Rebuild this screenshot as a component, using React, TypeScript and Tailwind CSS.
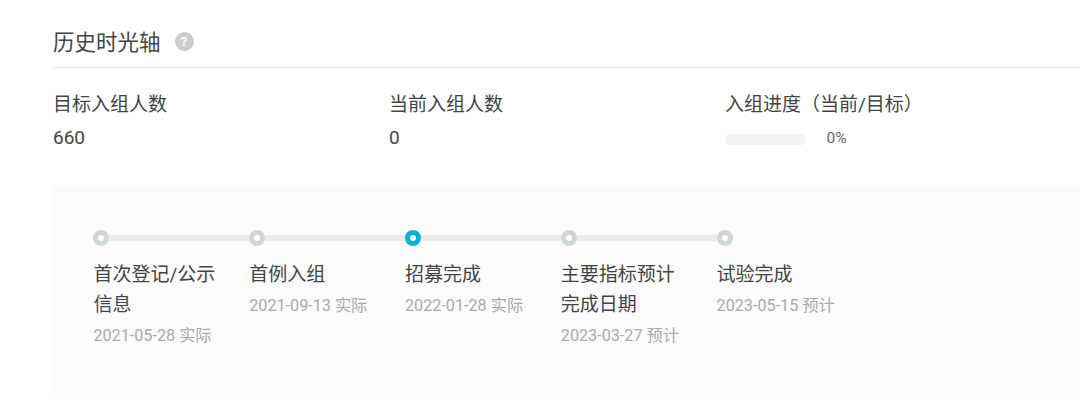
const FONT = "font-['Roboto','Noto_Sans_CJK_SC',sans-serif]";

const steps = [
  { title: "首次登记/公示信息", date: "2021-05-28 实际" },
  { title: "首例入组", date: "2021-09-13 实际" },
  { title: "招募完成", date: "2022-01-28 实际", active: true },
  { title: "主要指标预计完成日期", date: "2023-03-27 预计" },
  { title: "试验完成", date: "2023-05-15 预计", last: true },
];

function Stat({ label, children }: { label: string; children: React.ReactNode }) {
  return (
    <div className="w-[336px] shrink-0">
      <div className="text-[19px] leading-[30px] text-[#444]">{label}</div>
      <div className="mt-[3px] h-[30px] flex items-center">{children}</div>
    </div>
  );
}

export default function App() {
  return (
    <div className={`${FONT} w-[1080px] h-[412px] overflow-hidden bg-white pl-[53px] pt-[20px]`}>
      <div className="h-[48px] w-[1027px] border-b border-[#e8e8e8] flex items-start">
        <span className="text-[21.5px] leading-[46px] text-[#444]">历史时光轴</span>
        <span className="ml-[14px] mt-[12px] w-[19px] h-[19px] rounded-full bg-[#cccccc] text-white text-[13px] font-bold leading-[19px] text-center">?</span>
      </div>
      <div className="flex pt-[22px]">
        <Stat label="目标入组人数">
          <span className="text-[19px] text-[#444]">660</span>
        </Stat>
        <Stat label="当前入组人数">
          <span className="text-[19px] text-[#444]">0</span>
        </Stat>
        <Stat label="入组进度（当前/目标）">
          <div className="w-[81px] h-[11px] rounded-full bg-[#f3f3f3] mt-[2px]" />
          <span className="ml-[20.5px] mt-[2px] text-[15.5px] text-[#666]">0%</span>
        </Stat>
      </div>
      <div className="mt-[34px] h-[206px] w-[1027px] bg-[#fbfbfb] pl-[40.4px] pt-[43px]">
        <div className="flex">
          {steps.map((s) => (
            <div key={s.title} className="w-[155.8px] shrink-0">
              <div className="flex items-center h-[16px]">
                <span
                  className={`w-[16px] h-[16px] shrink-0 rounded-full border-[5px] bg-white ${
                    s.active ? "border-[#00b4cc]" : "border-[#cdd6d8]"
                  }`}
                />
                {!s.last && <span className="flex-1 h-[6px] bg-[#ebebeb]" />}
              </div>
              <div className="mt-[14px] w-[130px] text-[19px] leading-[30px] text-[#444]">{s.title}</div>
              <div className="mt-[3px] text-[16.2px] leading-[26px] text-[#aaa]">{s.date}</div>
            </div>
          ))}
        </div>
      </div>
    </div>
  );
}
